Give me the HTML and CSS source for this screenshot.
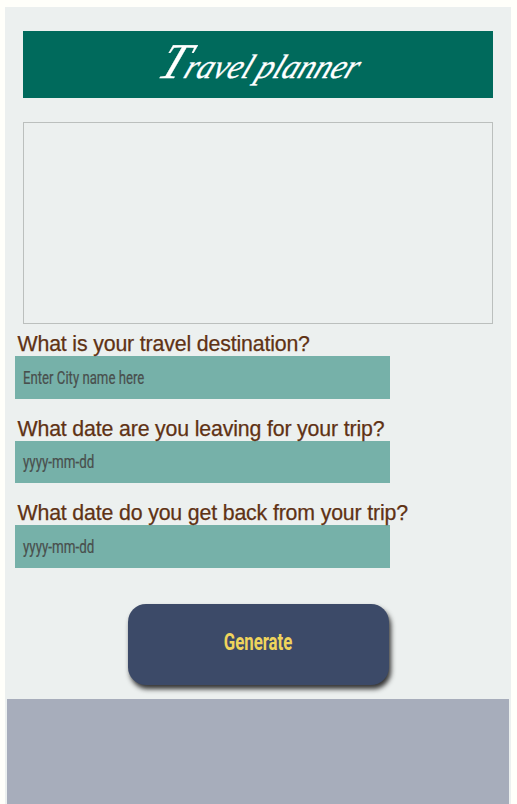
FILE: index.html
```html
<!DOCTYPE html>
<html lang="en">
<head>
<meta charset="utf-8">
<title>Travel planner</title>
<link rel="stylesheet" href="styles.css">
</head>
<body>
<main class="app">
  <header class="banner"><h1 class="title">Travel planner</h1></header>
  <section class="entry"></section>
  <form class="form">
    <div class="field">
      <label class="label">What is your travel destination?</label>
      <div class="input"><span class="hint">Enter City name here</span></div>
    </div>
    <div class="field field-short">
      <label class="label">What date are you leaving for your trip?</label>
      <div class="input"><span class="hint hint-date">yyyy-mm-dd</span></div>
    </div>
    <div class="field">
      <label class="label">What date do you get back from your trip?</label>
      <div class="input"><span class="hint hint-date">yyyy-mm-dd</span></div>
    </div>
    <button class="generate" type="button"><span class="generate-text">Generate</span></button>
  </form>
  <footer class="footer"></footer>
</main>
</body>
</html>
```
FILE: styles.css
```css
* { box-sizing: border-box; }
html { background: #fffffa; }
body { margin: 0; height: 804px; overflow: hidden; }
.app {
  width: 506px;
  height: 797px;
  margin: 7px 0 0 5px;
  padding-top: 24px;
  background: #ecf0ef;
  display: flex;
  flex-direction: column;
}
.banner {
  height: 67px;
  margin: 0 18px;
  background: #006a5c;
  display: flex;
  justify-content: center;
  align-items: center;
}
.title {
  margin: 0;
  color: #fff;
  font: italic 400 34px/67px "Liberation Serif", serif;
  white-space: nowrap;
  word-spacing: -2px;
  -webkit-text-stroke: .3px #fff;
  transform: translate(3px, -1px) skewX(-22deg) scaleX(.95);
}
.title::first-letter { font-size: 50px; }
.entry {
  height: 202px;
  margin: 24px 18px 0;
  border: 1px solid #bbbfbd;
}
.form {
  height: 375px;
  padding: 8px 10px 0;
  display: flex;
  flex-direction: column;
}
.field { margin-bottom: 18px; }
.field .label { height: 24px; }
.field-short .input { height: 42px; }
.label {
  display: block;
  padding-left: 2.5px;
  color: #5f3214;
  font: 21.3px/24px "Liberation Sans", Arial, sans-serif;
  letter-spacing: -.15px;
  -webkit-text-stroke: .25px #5f3214;
  white-space: nowrap;
}
.input {
  width: 375px;
  height: 43px;
  padding-left: 8px;
  background: #76b1a9;
  display: flex;
  align-items: center;
}
.hint {
  color: #494f4d;
  font: 17.5px/24px Roboto, sans-serif;
  -webkit-text-stroke: .2px #494f4d;
  white-space: nowrap;
  transform: scaleX(.753);
  transform-origin: left;
}
.hint-date { transform: scaleX(.765); }
.generate {
  width: 261px;
  height: 81px;
  margin: 18px 0 0 113px;
  padding: 0 0 6px;
  border: 0;
  border-radius: 18px;
  background: #3c4a68;
  box-shadow: 2px 4px 5px #333;
  display: flex;
  justify-content: center;
  align-items: center;
}
.generate-text {
  color: #efd45c;
  font: 700 24px/30px Roboto, sans-serif;
  transform: scaleX(.7);
}
.footer {
  flex: 1;
  margin: 0 2px;
  background: #a7adbb;
}
```
